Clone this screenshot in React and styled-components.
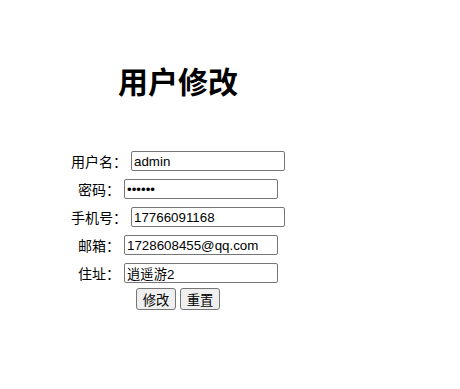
import React from 'react';
import styled, { createGlobalStyle } from 'styled-components';

const GlobalStyle = createGlobalStyle`
  body {
    margin: 8px;
    font-family: 'Liberation Sans', 'Noto Sans CJK SC', sans-serif;
    color: #000;
    background: #fff;
  }
`;

const fields = [
  { label: '用户名：', value: 'admin' },
  { label: '密码：', value: '123456', type: 'password' },
  { label: '手机号：', value: '17766091168' },
  { label: '邮箱：', value: '1728608455@qq.com' },
  { label: '住址：', value: '逍遥游2' },
];

function App() {
  return (
    <>
      <GlobalStyle />
      <Wrapper>
        <Title>用户修改</Title>
        <Form onSubmit={(e) => e.preventDefault()}>
          <FieldList>
            {fields.map((f) => (
              <Row key={f.label}>
                <Label>{f.label}</Label>
                <Input type={f.type || 'text'} defaultValue={f.value} />
              </Row>
            ))}
          </FieldList>
          <Actions>
            <Button type='submit'>修改</Button>
            <Button type='reset'>重置</Button>
          </Actions>
        </Form>
      </Wrapper>
    </>
  );
}

export default App;

const Wrapper = styled.div`
  width: 340px;
  display: flex;
  flex-direction: column;
  align-items: center;
`;

const Title = styled.h1`
  margin: 57px 0 0;
  font-size: 30px;
  line-height: 30px;
  font-weight: bold;
  font-family: 'Noto Sans CJK SC', sans-serif;
`;

const Form = styled.form`
  margin-top: 56px;
  display: flex;
  flex-direction: column;
  align-items: center;
`;

const FieldList = styled.div`
  display: flex;
  flex-direction: column;
  gap: 8px;
`;

const Row = styled.div`
  display: flex;
  justify-content: center;
  align-items: center;
  gap: 4px;
  height: 20px;
`;

const Label = styled.span`
  font-size: 14px;
  font-family: 'Noto Sans CJK SC', sans-serif;
  line-height: 20px;
`;

const Input = styled.input`
  box-sizing: border-box;
  width: 154px;
  height: 20px;
  padding: 1px 2px;
  border: 1px solid #767676;
  border-radius: 2px;
  font-size: 13.33px;
  font-family: 'Liberation Sans', 'Noto Sans CJK SC', sans-serif;
  color: #000;
  background: #fff;
  outline: none;
`;

const Actions = styled.div`
  margin-top: 5px;
  display: flex;
  gap: 4px;
`;

const Button = styled.button`
  box-sizing: border-box;
  width: 40px;
  height: 22px;
  padding: 0;
  border: 1px solid #767676;
  border-radius: 3px;
  background: #efefef;
  font-size: 13.33px;
  font-family: 'Noto Sans CJK SC', sans-serif;
  color: #000;
  cursor: pointer;
`;
